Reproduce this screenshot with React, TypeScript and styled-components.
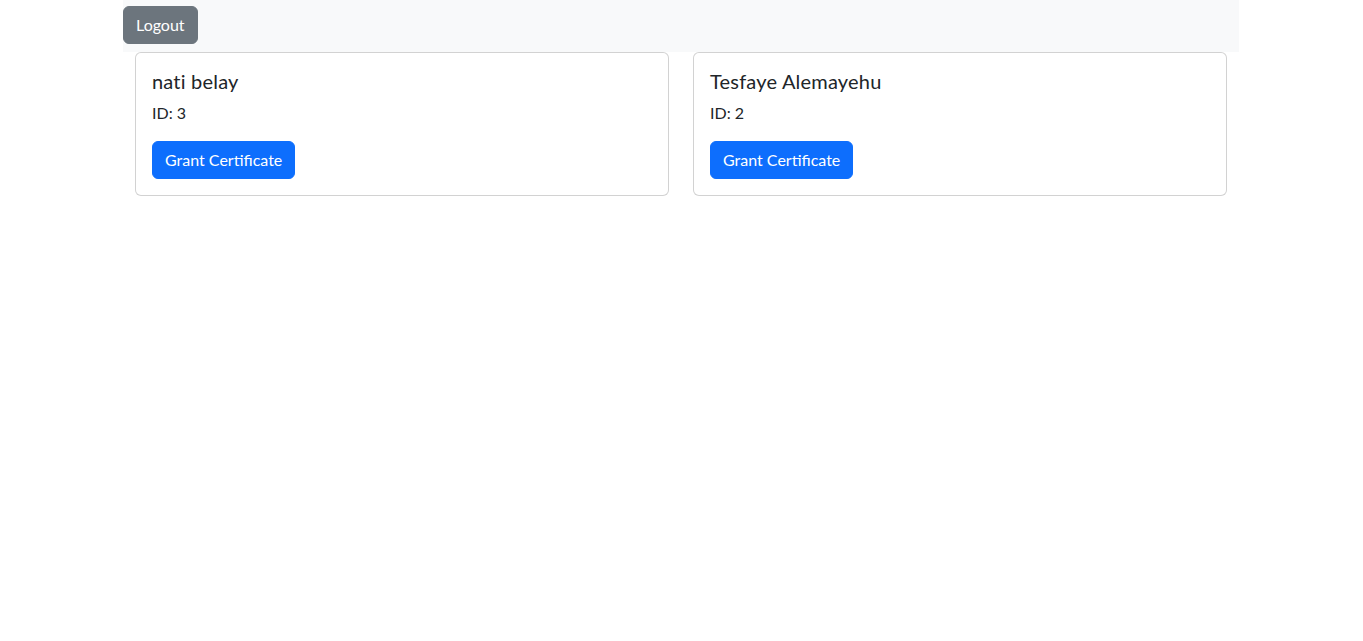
import React from "react";
import styled, { createGlobalStyle } from "styled-components";

const GlobalStyle = createGlobalStyle`
  *, *::before, *::after { box-sizing: border-box; }
  body {
    margin: 0;
    padding-right: 1px;
    font-family: Lato, "Noto Sans", "Liberation Sans", sans-serif;
    font-size: 16px;
    line-height: 1.5;
    color: #212529;
    background: #fff;
  }
`;

const Page = styled.div`
  max-width: 1116px;
  margin: 0 auto;
`;

const TopBar = styled.nav`
  display: flex;
  align-items: center;
  background: #f8f9fa;
  padding: 6px 0 8px;
`;

const Button = styled.button<{ $variant: "primary" | "secondary" }>`
  font-family: inherit;
  font-size: 16px;
  line-height: 24px;
  padding: 6px 12px;
  border: 1px solid ${(p) => (p.$variant === "primary" ? "#0d6efd" : "#6c757d")};
  background: ${(p) => (p.$variant === "primary" ? "#0d6efd" : "#6c757d")};
  color: #fff;
  border-radius: 6px;
  cursor: pointer;
`;

const Grid = styled.div`
  display: grid;
  grid-template-columns: 1fr 1fr;
  column-gap: 24px;
  padding: 0 12px;
`;

const Card = styled.div`
  border: 1px solid rgba(0, 0, 0, 0.175);
  border-radius: 6px;
  padding: 16px;
  background: #fff;
`;

const Title = styled.h5`
  margin: 0 0 8px;
  font-size: 20px;
  font-weight: 400;
  line-height: 1.2;
  letter-spacing: 0.2px;
`;

const Info = styled.p`
  margin: 0 0 16px;
`;

const students = [
  { name: "nati belay", id: 3 },
  { name: "Tesfaye Alemayehu", id: 2 },
];

export default function App() {
  return (
    <>
      <GlobalStyle />
      <Page>
        <TopBar>
          <Button $variant="secondary">Logout</Button>
        </TopBar>
        <Grid>
          {students.map((s) => (
            <Card key={s.id}>
              <Title>{s.name}</Title>
              <Info>ID: {s.id}</Info>
              <Button $variant="primary">Grant Certificate</Button>
            </Card>
          ))}
        </Grid>
      </Page>
    </>
  );
}
